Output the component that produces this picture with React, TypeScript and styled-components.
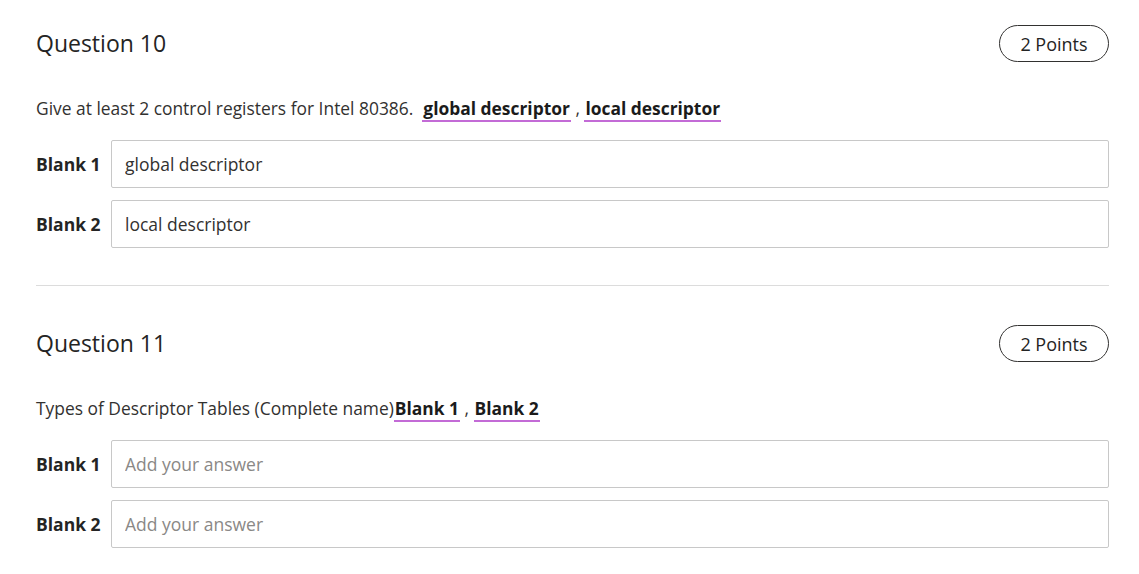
import styled, { createGlobalStyle } from 'styled-components';

const QUESTIONS = [
  {
    number: 10,
    points: 2,
    prompt: 'Give at least 2 control registers for Intel 80386.',
    gap: true,
    answers: ['global descriptor', 'local descriptor'],
  },
  {
    number: 11,
    points: 2,
    prompt: 'Types of Descriptor Tables (Complete name)',
    gap: false,
    answers: ['', ''],
  },
];

const GlobalStyle = createGlobalStyle`
  body {
    margin: 0;
    background: #ffffff;
    font-family: 'Open Sans', 'Noto Sans', sans-serif;
    color: #323130;
  }
`;

export default function App() {
  return (
    <>
      <GlobalStyle />
      <StyledPage>
        {QUESTIONS.map((q, index) => (
          <QuestionBlock key={q.number}>
            {index > 0 && <Divider />}
            <QuestionHeader>
              <QuestionTitle>Question {q.number}</QuestionTitle>
              <PointsPill>{q.points} Points</PointsPill>
            </QuestionHeader>
            <Prompt>
              {q.prompt}
              {q.gap ? '\u00a0 ' : ''}
              {q.answers.map((answer, i) => (
                <span key={i}>
                  {i > 0 && ' , '}
                  <BlankMark>{answer || `Blank ${i + 1}`}</BlankMark>
                </span>
              ))}
            </Prompt>
            <BlankList>
              {q.answers.map((answer, i) => (
                <BlankRow key={i}>
                  <BlankLabel>Blank {i + 1}</BlankLabel>
                  <BlankInput defaultValue={answer} placeholder="Add your answer" />
                </BlankRow>
              ))}
            </BlankList>
          </QuestionBlock>
        ))}
      </StyledPage>
    </>
  );
}

const StyledPage = styled.main`
  padding: 25px 30px 0 36px;
`;

const QuestionBlock = styled.section`
  display: flex;
  flex-direction: column;
`;

const Divider = styled.hr`
  margin: 37px 0 39px;
  border: none;
  border-top: 1px solid #dcdcdc;
`;

const QuestionHeader = styled.div`
  display: flex;
  align-items: center;
  justify-content: space-between;
  height: 37px;
`;

const QuestionTitle = styled.h2`
  margin: 0 0 2px;
  font-size: 23px;
  font-weight: 400;
  color: #242424;
`;

const PointsPill = styled.div`
  width: 110px;
  height: 37px;
  box-sizing: border-box;
  display: flex;
  align-items: center;
  justify-content: center;
  border: 1px solid #323130;
  border-radius: 19px;
  font-size: 18px;
  color: #242424;
`;

const Prompt = styled.p`
  margin: 34px 0 0;
  font-size: 17.4px;
  line-height: 24px;
  color: #323130;
`;

const BlankMark = styled.span`
  display: inline-block;
  padding: 0 1px;
  border-bottom: 2px solid #c36bd6;
  font-weight: 700;
  color: #1b1b1b;
  line-height: 24px;
`;

const BlankList = styled.div`
  display: flex;
  flex-direction: column;
  gap: 12px;
  margin-top: 18px;
`;

const BlankRow = styled.div`
  display: flex;
  align-items: center;
`;

const BlankLabel = styled.label`
  flex-shrink: 0;
  width: 75px;
  font-size: 17.5px;
  font-weight: 700;
  color: #242424;
`;

const BlankInput = styled.input`
  flex: 1;
  height: 48px;
  box-sizing: border-box;
  padding: 0 13px;
  border: 1px solid #c8c8c8;
  border-radius: 2px;
  font-family: inherit;
  font-size: 17.5px;
  color: #323130;
  background: #ffffff;
  outline: none;

  &::placeholder {
    color: #8a8886;
  }
`;
